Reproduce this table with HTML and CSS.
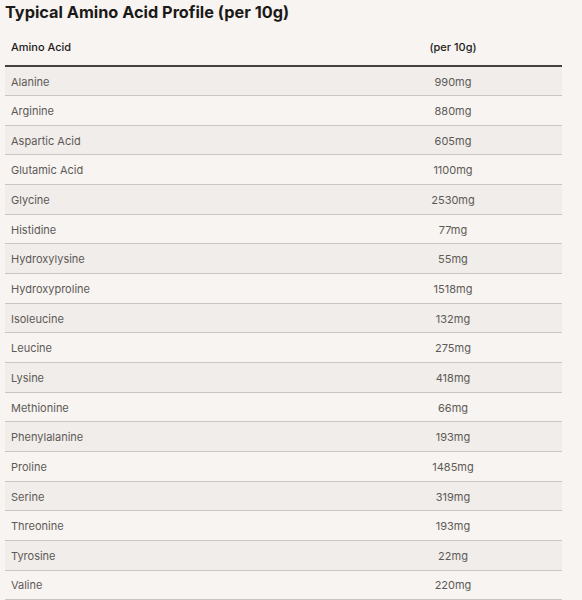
FILE: index.html
```html
<!DOCTYPE html>
<html>
<head>
<meta charset="utf-8">
<link rel="stylesheet" href="styles.css">
</head>
<body>
<h2 class="title">Typical Amino Acid Profile (per 10g)</h2>
<table class="amino">
  <thead>
    <tr><th class="name">Amino Acid</th><th class="val">(per 10g)</th></tr>
  </thead>
  <tbody>
    <tr><td class="name">Alanine</td><td class="val">990mg</td></tr>
    <tr><td class="name">Arginine</td><td class="val">880mg</td></tr>
    <tr><td class="name">Aspartic Acid</td><td class="val">605mg</td></tr>
    <tr><td class="name">Glutamic Acid</td><td class="val">1100mg</td></tr>
    <tr><td class="name">Glycine</td><td class="val">2530mg</td></tr>
    <tr><td class="name">Histidine</td><td class="val">77mg</td></tr>
    <tr><td class="name">Hydroxylysine</td><td class="val">55mg</td></tr>
    <tr><td class="name">Hydroxyproline</td><td class="val">1518mg</td></tr>
    <tr><td class="name">Isoleucine</td><td class="val">132mg</td></tr>
    <tr><td class="name">Leucine</td><td class="val">275mg</td></tr>
    <tr><td class="name">Lysine</td><td class="val">418mg</td></tr>
    <tr><td class="name">Methionine</td><td class="val">66mg</td></tr>
    <tr><td class="name">Phenylalanine</td><td class="val">193mg</td></tr>
    <tr><td class="name">Proline</td><td class="val">1485mg</td></tr>
    <tr><td class="name">Serine</td><td class="val">319mg</td></tr>
    <tr><td class="name">Threonine</td><td class="val">193mg</td></tr>
    <tr><td class="name">Tyrosine</td><td class="val">22mg</td></tr>
    <tr><td class="name">Valine</td><td class="val">220mg</td></tr>
  </tbody>
</table>
</body>
</html>
```
FILE: styles.css
```css
html, body {
  margin: 0;
  padding: 0;
  background: #f7f4f1;
}
body {
  padding: 0 20px 0 5px;
  font-family: "Inter", "Noto Sans", sans-serif;
}
.title {
  margin: 0;
  padding-top: 2px;
  font-family: "Inter", sans-serif;
  font-weight: 700;
  font-size: 16.3px;
  line-height: 20px;
  color: #1c1a19;
}
.amino {
  width: 557px;
  border-collapse: collapse;
  margin-top: 7px;
  font-size: 11px;
}
.amino th {
  height: 37px;
  box-sizing: border-box;
  padding: 0 6px;
  font-weight: 500;
  color: #1e1c1b;
  border-bottom: 2px solid #45403c;
  vertical-align: middle;
}
.amino td {
  height: 29.67px;
  box-sizing: border-box;
  padding: 1px 6px 0;
  color: #5e5a57;
  border-bottom: 1px solid #c9c5c0;
  vertical-align: middle;
}
.amino .name {
  text-align: left;
}
.amino .val {
  text-align: center;
  width: 218px;
}
.amino tbody tr:nth-child(odd) {
  background: #f0edea;
}
```
